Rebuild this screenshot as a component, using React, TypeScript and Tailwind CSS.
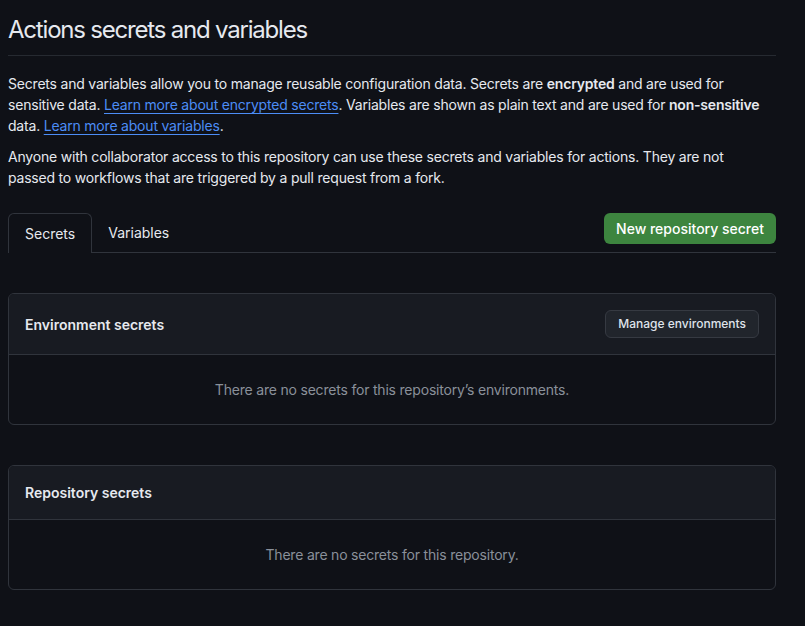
import React from 'react';

const Box = ({ title, action, empty }: { title: string; action?: React.ReactNode; empty: string }) => (
    <div className="border border-[#30343c] rounded-md overflow-hidden">
        <div className="bg-[#181b22] border-b border-[#30343c] px-4 py-4 flex items-center justify-between">
            <h3 className="text-sm font-semibold text-[#e6e9ef] leading-[21px]">{title}</h3>
            {action}
        </div>
        <div className="py-6 text-center text-sm leading-[21px] tracking-[-0.2px] text-[#8a909a]">{empty}</div>
    </div>
);

export default function App() {
    return (
        <div className="min-h-screen bg-[#0f1117] text-[#e6e9ef] font-['Inter','Liberation_Sans',sans-serif] antialiased">
            <div className="w-[768px] ml-2 pb-9">
                {/* Header */}
                <div className="pt-[15px] pb-[10px] border-b border-[#262a31]">
                    <h1 className="text-2xl leading-[30px] font-normal tracking-[-1.2px]">Actions secrets and variables</h1>
                </div>

                {/* Description */}
                <p className="mt-[17px] text-sm leading-[21px] tracking-[-0.2px]">
                    Secrets and variables allow you to manage reusable configuration data. Secrets are <strong className="font-semibold">encrypted</strong> and are used for<br />
                    sensitive data. <a href="#" className="text-[#4c8df6] underline underline-offset-[3px]">Learn more about encrypted secrets</a>. Variables are shown as plain text and are used for <strong className="font-semibold">non-sensitive</strong><br />
                    data. <a href="#" className="text-[#4c8df6] underline underline-offset-[3px]">Learn more about variables</a>.
                </p>
                <p className="mt-[10px] text-sm leading-[21px] tracking-[-0.2px]">
                    Anyone with collaborator access to this repository can use these secrets and variables for actions. They are not<br />
                    passed to workflows that are triggered by a pull request from a fork.
                </p>

                {/* Tabs */}
                <div className="mt-[25px] flex items-start">
                    <div className="flex items-end flex-1">
                        <div className="h-[40px] px-4 flex items-center border border-[#30343c] border-b-0 rounded-t-md bg-[#0f1117] text-sm">
                            Secrets
                        </div>
                        <div className="flex-1 h-[40px] border-b border-[#30343c] flex items-center">
                            <span className="px-4 text-sm">Variables</span>
                        </div>
                    </div>
                    <div className="h-[40px] border-b border-[#30343c]">
                        <button className="h-[31px] px-3 rounded-md bg-[#3d853f] text-white text-sm font-medium">
                            New repository secret
                        </button>
                    </div>
                </div>

                {/* Environment secrets */}
                <div className="mt-[40px]">
                    <Box
                        title="Environment secrets"
                        empty="There are no secrets for this repository’s environments."
                        action={
                            <button className="h-[28px] px-3 rounded-md bg-[#21252c] border border-[#363a42] text-xs font-medium text-[#dfe3ea]">
                                Manage environments
                            </button>
                        }
                    />
                </div>

                {/* Repository secrets */}
                <div className="mt-[40px]">
                    <Box title="Repository secrets" empty="There are no secrets for this repository." />
                </div>
            </div>
        </div>
    );
}
